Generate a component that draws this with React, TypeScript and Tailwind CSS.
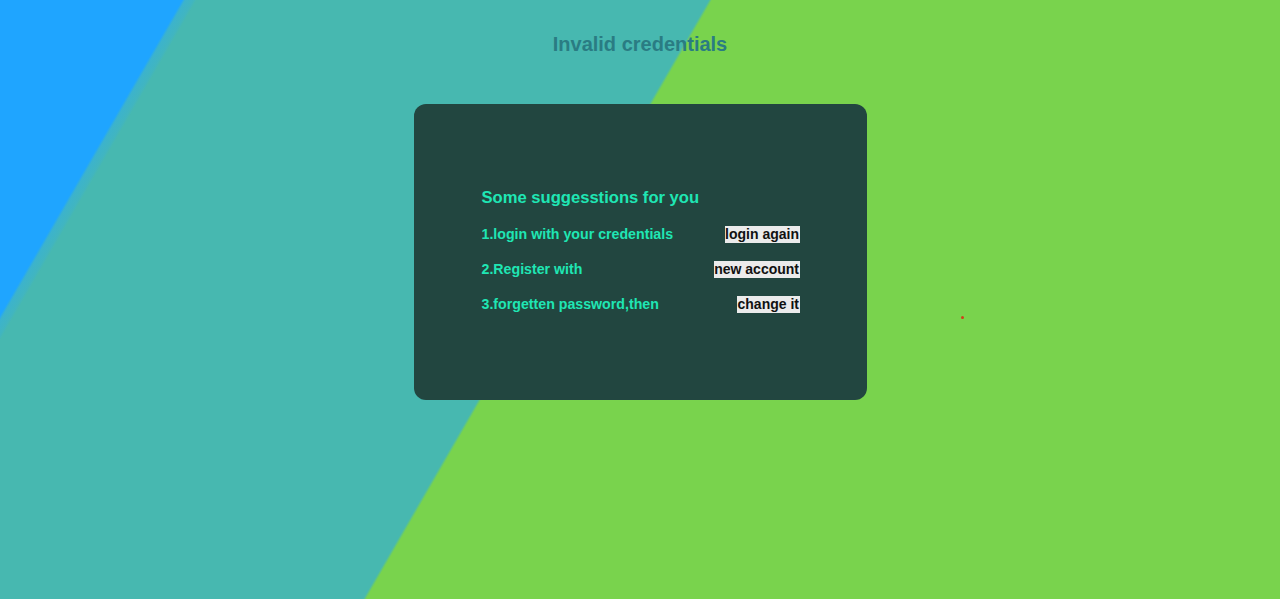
export default function App() {
  const rows = [
    { label: "1.login with your credentials", action: "login again" },
    { label: "2.Register with", action: "new account" },
    { label: "3.forgetten password,then", action: "change it" },
  ];
  return (
    <div
      className="relative w-full h-[599px] overflow-hidden bg-[linear-gradient(120deg,#1fa5ff_0%,#1fa5ff_11.2%,#3cb3cc_11.4%,#41b5c0_11.9%,#47b8b0_12.1%,#47b8b0_43.6%,#79d34d_43.8%,#79d34d_100%)]"
      style={{ fontFamily: '"Liberation Sans", Arial, sans-serif' }}
    >
      <div className="flex flex-col items-center">
        <h1 className="mt-[32px] text-[20px] leading-[24px] font-bold text-[#2a7c83]">
          Invalid credentials
        </h1>
        <div className="mt-[48px] w-[453px] h-[296px] rounded-[12px] bg-[#224640] pl-[68px] pr-[67px] pt-[82px]">
          <h2 className="text-[16.6px] leading-[24px] font-bold text-[#1fe6b4]">
            Some suggesstions for you
          </h2>
          <div className="mt-[16px] flex flex-col gap-[18px]">
            {rows.map((r) => (
              <div key={r.label} className="flex items-center justify-between h-[17px]">
                <span className="text-[14.2px] font-bold text-[#1fe6b4]">{r.label}</span>
                <span className="bg-[#ebebeb] px-[0.5px] text-[14px] leading-[17px] font-bold text-[#111]">
                  {r.action}
                </span>
              </div>
            ))}
          </div>
        </div>
      </div>
      <div className="absolute left-[961px] top-[316px] w-[3px] h-[3px] rounded-full bg-[#d0401a]" />
    </div>
  );
}
